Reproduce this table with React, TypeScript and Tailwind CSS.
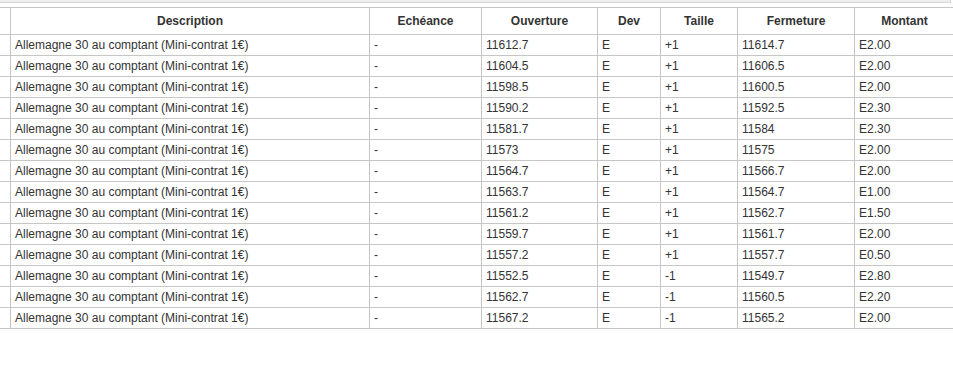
import React from "react";

const rows: [string, string, string, string][] = [
  ["11612.7", "+1", "11614.7", "E2.00"],
  ["11604.5", "+1", "11606.5", "E2.00"],
  ["11598.5", "+1", "11600.5", "E2.00"],
  ["11590.2", "+1", "11592.5", "E2.30"],
  ["11581.7", "+1", "11584", "E2.30"],
  ["11573", "+1", "11575", "E2.00"],
  ["11564.7", "+1", "11566.7", "E2.00"],
  ["11563.7", "+1", "11564.7", "E1.00"],
  ["11561.2", "+1", "11562.7", "E1.50"],
  ["11559.7", "+1", "11561.7", "E2.00"],
  ["11557.2", "+1", "11557.7", "E0.50"],
  ["11552.5", "-1", "11549.7", "E2.80"],
  ["11562.7", "-1", "11560.5", "E2.20"],
  ["11567.2", "-1", "11565.2", "E2.00"],
];

const cols = "grid grid-cols-[11px_359px_112px_116px_63px_77px_117px_100px]";
const cell = "border-r border-b border-[#c6c6c6] truncate";

export default function App() {
  return (
    <div
      className="w-[953px] h-[378px] overflow-hidden bg-white text-[12px] text-[#333333]"
      style={{ fontFamily: '"Liberation Sans", Arial, sans-serif' }}
    >
      <div className="h-[3px] w-[951px] bg-[#eeeeee] border-b border-r border-[#d6d6d6]" />
      <div className="mt-[4px] w-[1100px] border-t border-[#c6c6c6]">
        <div className={`${cols} h-[27px] font-bold`}>
          <div className={`${cell} h-[27px]`} />
          <div className={`${cell} h-[27px] leading-[26px] text-center`}>Description</div>
          <div className={`${cell} h-[27px] leading-[26px] text-center`}>Echéance</div>
          <div className={`${cell} h-[27px] leading-[26px] text-center`}>Ouverture</div>
          <div className={`${cell} h-[27px] leading-[26px] text-center`}>Dev</div>
          <div className={`${cell} h-[27px] leading-[26px] text-center`}>Taille</div>
          <div className={`${cell} h-[27px] leading-[26px] text-center`}>Fermeture</div>
          <div className={`${cell} h-[27px] leading-[26px] text-center`}>Montant</div>
        </div>
        {rows.map((r, i) => (
          <div key={i} className={`${cols} h-[21px]`}>
            <div className={`${cell} h-[21px]`} />
            <div className={`${cell} h-[21px] leading-[20px] pl-[4px]`}>
              Allemagne 30 au comptant (Mini-contrat 1€)
            </div>
            <div className={`${cell} h-[21px] leading-[20px] pl-[4px]`}>-</div>
            <div className={`${cell} h-[21px] leading-[20px] pl-[4px]`}>{r[0]}</div>
            <div className={`${cell} h-[21px] leading-[20px] pl-[4px]`}>E</div>
            <div className={`${cell} h-[21px] leading-[20px] pl-[4px]`}>{r[1]}</div>
            <div className={`${cell} h-[21px] leading-[20px] pl-[4px]`}>{r[2]}</div>
            <div className={`${cell} h-[21px] leading-[20px] pl-[4px]`}>{r[3]}</div>
          </div>
        ))}
      </div>
    </div>
  );
}
